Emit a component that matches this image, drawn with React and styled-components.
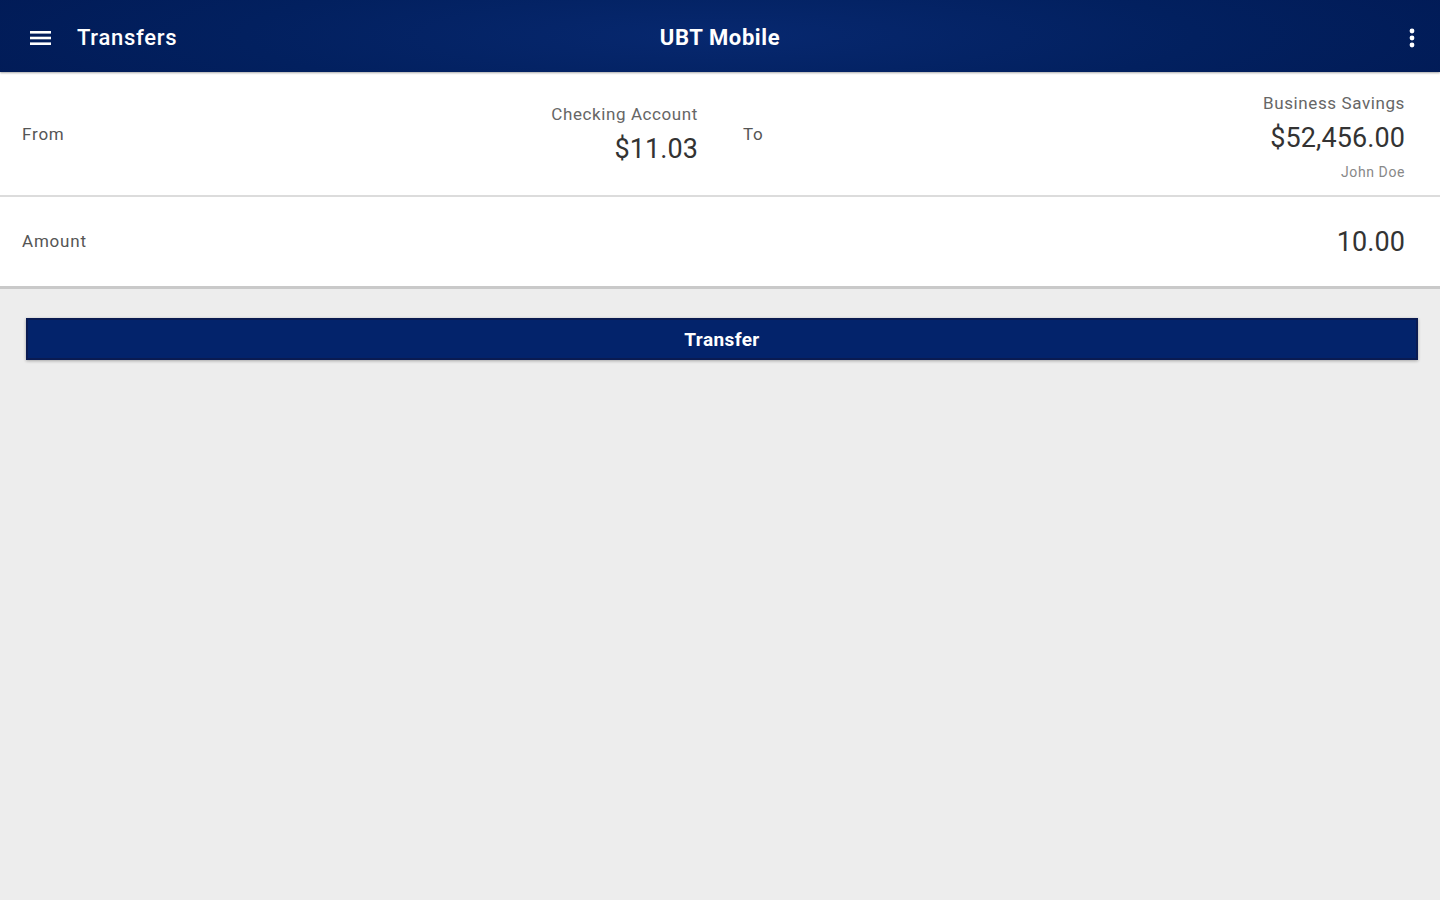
import React from 'react';
import styled, { createGlobalStyle } from 'styled-components';

const GlobalStyle = createGlobalStyle`
  *, *::before, *::after {
    box-sizing: border-box;
  }
  html, body {
    margin: 0;
    padding: 0;
    background: #ededed;
    font-family: Roboto, "Liberation Sans", Arial, sans-serif;
  }
`;

const Page = styled.div`
  min-height: 900px;
  background: #ededed;
`;

const AppBar = styled.header`
  height: 72px;
  display: flex;
  align-items: center;
  position: relative;
  background: radial-gradient(ellipse 60% 160% at 50% 50%, #07286f 0%, #02205f 55%, #011a55 100%);
  box-shadow: 0 1px 2px rgba(0, 0, 0, 0.35);
  color: #fff;
`;

const MenuButton = styled.button`
  width: 80px;
  height: 72px;
  padding: 3px 0 0 30px;
  border: none;
  background: transparent;
  display: flex;
  align-items: center;
  cursor: pointer;
`;

const ScreenTitle = styled.h1`
  margin: 3px 0 0 -3px;
  font-size: 22px;
  font-weight: 500;
  letter-spacing: 0.7px;
`;

const AppName = styled.div`
  position: absolute;
  left: 50%;
  top: 50%;
  transform: translate(-50%, -45%);
  font-size: 22px;
  font-weight: 700;
  letter-spacing: 0.6px;
`;

const Overflow = styled.button`
  margin-left: auto;
  width: 56px;
  height: 72px;
  border: none;
  background: transparent;
  display: flex;
  align-items: center;
  justify-content: center;
  padding: 3px 0 0 0;
  cursor: pointer;
`;

const Card = styled.section`
  background: #fff;
  border-bottom: 3px solid #c9c9c9;
`;

const Row = styled.div`
  display: flex;
  align-items: center;
  height: ${p => p.$h}px;
  border-bottom: ${p => (p.$divider ? '2px solid #dcdcdc' : 'none')};
`;

const Half = styled.div`
  flex: 0 0 ${p => p.$basis || '50%'};
  min-width: 0;
  display: flex;
  align-items: center;
  justify-content: space-between;
  padding: 0 ${p => p.$pr}px 0 ${p => p.$pl}px;
  height: 100%;
`;

const Label = styled.span`
  font-size: 17px;
  color: #555;
  letter-spacing: 0.8px;
  margin-top: ${p => p.$mt || 0}px;
`;

const Account = styled.div`
  display: flex;
  flex-direction: column;
  align-items: flex-end;
  margin-top: ${p => p.$mt || 0}px;
`;

const AccountName = styled.span`
  font-size: 17px;
  color: #666;
  line-height: 20px;
  letter-spacing: 0.6px;
`;

const Balance = styled.span`
  font-size: ${p => p.$size}px;
  color: #333;
  line-height: ${p => p.$lh || 34}px;
  letter-spacing: 0.1px;
`;

const Owner = styled.span`
  font-size: 14px;
  color: #888;
  line-height: 18px;
  letter-spacing: 0.6px;
`;

const Actions = styled.div`
  padding: 29px 22px 0 26px;
`;

const TransferButton = styled.button`
  width: 100%;
  height: 42px;
  border: 2px solid #0a1b52;
  background: #03236b;
  color: #fff;
  font-family: inherit;
  font-size: 19px;
  font-weight: 700;
  letter-spacing: 0.4px;
  box-shadow: 0 1px 3px rgba(0, 0, 0, 0.3);
  cursor: pointer;
`;

const Hamburger = () => (
  <svg width="21" height="16" viewBox="0 0 21 16">
    <rect x="0" y="1" width="21" height="2.6" fill="#fff" />
    <rect x="0" y="6.7" width="21" height="2.6" fill="#fff" />
    <rect x="0" y="12.4" width="21" height="2.6" fill="#fff" />
  </svg>
);

const Kebab = () => (
  <svg width="6" height="20" viewBox="0 0 6 20">
    <circle cx="3" cy="3" r="2.4" fill="#fff" />
    <circle cx="3" cy="10" r="2.4" fill="#fff" />
    <circle cx="3" cy="17" r="2.4" fill="#fff" />
  </svg>
);

export default function App() {
  return (
    <Page>
      <GlobalStyle />
      <AppBar>
        <MenuButton aria-label="Menu">
          <Hamburger />
        </MenuButton>
        <ScreenTitle>Transfers</ScreenTitle>
        <AppName>UBT Mobile</AppName>
        <Overflow aria-label="More">
          <Kebab />
        </Overflow>
      </AppBar>

      <Card>
        <Row $h={125} $divider>
          <Half $pl={22} $pr={22}>
            <Label>From</Label>
            <Account $mt={10}>
              <AccountName>Checking Account</AccountName>
              <Balance $size={27} $lh={50}>$11.03</Balance>
            </Account>
          </Half>
          <Half $pl={23} $pr={35}>
            <Label>To</Label>
            <Account $mt={6}>
              <AccountName>Business Savings</AccountName>
              <Balance $size={27} $lh={50}>$52,456.00</Balance>
              <Owner>John Doe</Owner>
            </Account>
          </Half>
        </Row>
        <Row $h={89}>
          <Half $basis="100%" $pl={22} $pr={35}>
            <Label $mt={-1}>Amount</Label>
            <Balance $size={27}>10.00</Balance>
          </Half>
        </Row>
      </Card>

      <Actions>
        <TransferButton>Transfer</TransferButton>
      </Actions>
    </Page>
  );
}
